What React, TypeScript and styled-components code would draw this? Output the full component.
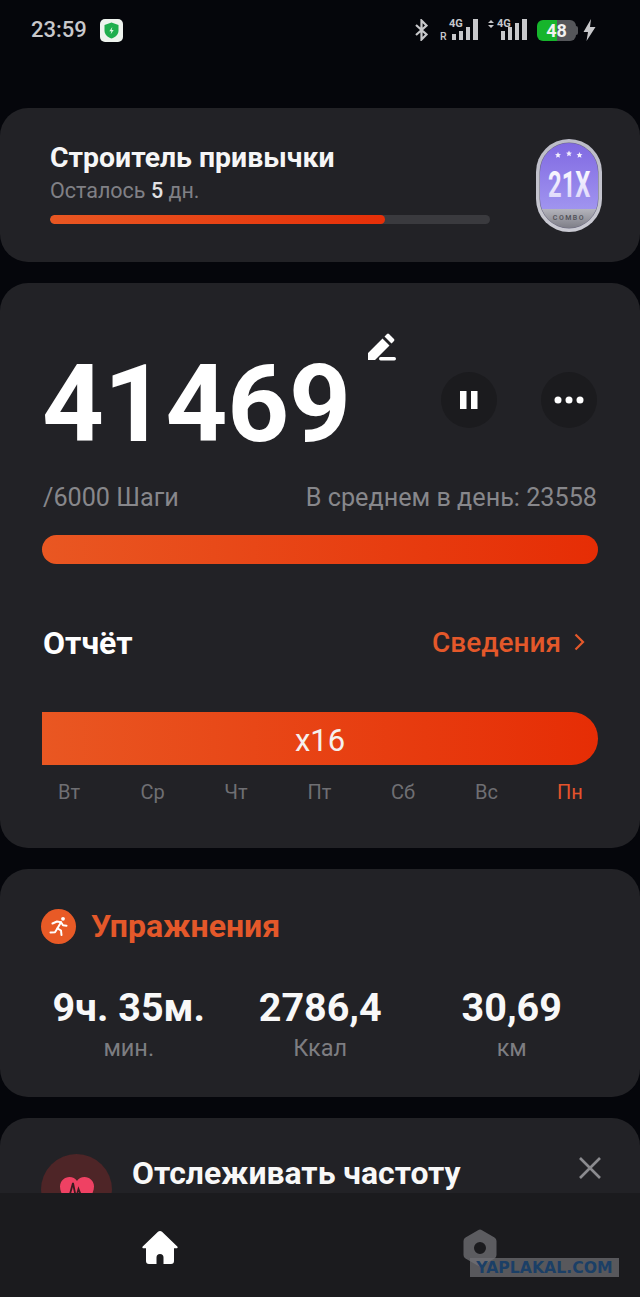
import React from "react";
import styled, { createGlobalStyle } from "styled-components";

const GlobalStyle = createGlobalStyle`
  html, body {
    margin: 0;
    padding: 0;
    background: #05060b;
  }

  body {
    font-family: Roboto, "Noto Sans", sans-serif;
  }
`;

const Page = styled.div`
  position: relative;
  width: 640px;
  height: 1297px;
  overflow: hidden;
  display: flex;
  flex-direction: column;
  background: #05060b;
`;

const StatusBar = styled.header`
  height: 108px;
  flex: none;
  box-sizing: border-box;
  padding: 19px 44px 0 31px;
  display: flex;
  align-items: flex-start;
  color: #c8c8cb;
`;

const Time = styled.span`
  font-size: 22px;
  font-weight: 500;
  line-height: 22px;
  margin-right: 13px;
`;

const StatusIcons = styled.div`
  margin-left: auto;
  display: flex;
  align-items: center;
  height: 22px;
`;

const SignalSvg = styled.svg<{ $gap: number }>`
  overflow: visible;
  margin-right: ${(props) => props.$gap}px;
`;

const Battery = styled.div`
  position: relative;
  width: 39px;
  height: 21px;
  margin: 0 7px 0 9px;
  border-radius: 6px;
  background: linear-gradient(90deg, #16b52c 0 51%, #55565a 51% 100%);
  color: #f1f1f1;
  font-size: 18px;
  font-weight: 700;
  line-height: 21px;
  text-align: center;

  &::after {
    content: "";
    position: absolute;
    right: -2px;
    top: 6px;
    width: 2px;
    height: 9px;
    border-radius: 0 2px 2px 0;
    background: #55565a;
  }
`;

const Cards = styled.main`
  flex: 1;
  display: flex;
  flex-direction: column;
  gap: 21px;
`;

const Card = styled.section`
  background: #222226;
  border-radius: 28px;
  box-sizing: border-box;
`;

const ChallengeCard = styled(Card)`
  height: 154px;
  padding: 0 38px 0 50px;
  display: flex;
  align-items: center;
  justify-content: space-between;
`;

const ChallengeInfo = styled.div`
  width: 440px;
  margin-top: -4px;
`;

const ChallengeTitle = styled.div`
  color: #f6f6f6;
  font-size: 28.4px;
  font-weight: 700;
  line-height: 32px;
`;

const ChallengeNote = styled.div`
  color: #808085;
  font-size: 21.5px;
  line-height: 26px;
  margin-top: 4px;

  b {
    color: #e2e2e4;
    font-weight: 500;
  }
`;

const ThinTrack = styled.div`
  height: 9px;
  margin-top: 11px;
  border-radius: 5px;
  background: #3a3a3e;
  overflow: hidden;
`;

const ThinFill = styled.div`
  height: 100%;
  border-radius: 5px;
  background: linear-gradient(90deg, #e95722, #e62f08);
`;

const StepsCard = styled(Card)`
  height: 565px;
  padding: 0 42px;
`;

const StepsHead = styled.div`
  height: 176px;
  display: flex;
  align-items: flex-start;
`;

const StepsCount = styled.div`
  color: #fff;
  font-size: 108px;
  font-weight: 700;
  line-height: 120px;
  margin-top: 61px;
  letter-spacing: -0.2px;
`;

const EditIcon = styled.svg`
  width: 30px;
  height: 30px;
  margin: 49px 0 0 16px;
`;

const RoundActions = styled.div`
  margin-left: auto;
  margin-top: 89px;
  margin-right: 1px;
  display: flex;
  gap: 44px;
`;

const RoundButton = styled.button`
  width: 56px;
  height: 56px;
  padding: 0;
  border: none;
  border-radius: 50%;
  background: #1b1b1e;
  display: flex;
  align-items: center;
  justify-content: center;
`;

const StepsMeta = styled.div`
  display: flex;
  justify-content: space-between;
  color: #87878b;
  font-size: 25.2px;
  line-height: 30px;
  margin: 24px 1px 0;
`;

const GoalBar = styled.div`
  height: 29px;
  margin-top: 22px;
  border-radius: 15px;
  background: linear-gradient(90deg, #e95722, #e62d05);
`;

const ReportRow = styled.div`
  display: flex;
  align-items: center;
  justify-content: space-between;
  margin-top: 60px;
  margin-left: 1px;
  height: 38px;
`;

const ReportTitle = styled.div`
  color: #fff;
  font-size: 32px;
  font-weight: 700;
`;

const DetailsLink = styled.a`
  display: flex;
  align-items: center;
  gap: 13px;
  color: #e4582a;
  font-size: 28px;
  font-weight: 500;
  margin: 0 13px 2px 0;
`;

const WeekBar = styled.div`
  height: 53px;
  margin-top: 50px;
  border-radius: 0 27px 27px 0;
  background: linear-gradient(90deg, #e95722, #e62d05);
  color: #f5f0ee;
  font-size: 31px;
  line-height: 58px;
  text-align: center;
`;

const WeekDays = styled.div`
  display: flex;
  justify-content: space-between;
  padding: 0 4px 0 3px;
  margin-top: 14px;
`;

const WeekDay = styled.span<{ $active?: boolean }>`
  width: 48px;
  text-align: center;
  color: ${(props) => (props.$active ? "#e4532c" : "#6f6f73")};
  font-size: 20px;
  line-height: 26px;
`;

const ExerciseCard = styled(Card)`
  height: 228px;
  padding: 39px 40px 0 41px;
`;

const ExerciseHead = styled.div`
  display: flex;
  align-items: center;
  gap: 15px;
`;

const ExerciseIcon = styled.div`
  width: 35px;
  height: 35px;
  border-radius: 50%;
  background: #e85a26;
  display: flex;
  align-items: center;
  justify-content: center;
`;

const ExerciseTitle = styled.div`
  color: #e4582a;
  font-size: 32px;
  font-weight: 700;
  line-height: 36px;
`;

const ExerciseStats = styled.div`
  display: grid;
  grid-template-columns: repeat(3, 191.5px);
  margin: 42px 0 0 -8px;
`;

const Stat = styled.div`
  text-align: center;
`;

const StatValue = styled.div`
  color: #f8f8f8;
  font-size: 39.5px;
  font-weight: 700;
  line-height: 44px;
  white-space: nowrap;
`;

const StatLabel = styled.div`
  color: #7d7d81;
  font-size: 23.5px;
  line-height: 28px;
  margin-top: 4px;
`;

const HeartCard = styled(Card)`
  flex: 1;
  padding: 36px 38px 0 41px;
  display: flex;
  align-items: flex-start;
`;

const HeartBadge = styled.div`
  width: 71px;
  height: 71px;
  flex: none;
  border-radius: 50%;
  background: #4e2527;
  display: flex;
  align-items: center;
  justify-content: center;
  padding-top: 6px;
  box-sizing: border-box;
`;

const HeartTitle = styled.div`
  color: #f8f8f8;
  font-size: 31.9px;
  font-weight: 700;
  line-height: 38px;
  margin-left: 20px;
`;

const CloseButton = styled.svg`
  width: 24px;
  height: 24px;
  margin-left: auto;
  margin-top: 2px;
`;

const BottomNav = styled.nav`
  position: absolute;
  left: 0;
  right: 0;
  bottom: 0;
  height: 104px;
  background: #1b1b1e;
  display: flex;
  padding-top: 38px;
  box-sizing: border-box;
`;

const NavItem = styled.div`
  width: 320px;
  display: flex;
  justify-content: center;
`;

const Watermark = styled.div`
  position: absolute;
  left: 470px;
  top: 65px;
  width: 149px;
  height: 19px;
  background: rgba(112, 112, 116, 0.72);
  color: #1b3f66;
  font-family: "DejaVu Sans", sans-serif;
  font-size: 15.7px;
  font-weight: 700;
  line-height: 19px;
  text-align: center;
  white-space: nowrap;
`;

const ShieldIcon = () => (
  <svg width="23" height="23" viewBox="0 0 23 23">
    <rect width="23" height="23" rx="5" fill="#eef3ee" />
    <path d="M11.5 3.5 18.5 6v5.5c0 4-3 6.800-7 8-4-1.200-7-4-7-8V6z" fill="#1fae4e" />
    <path d="M12.300 8 9.300 12.200h2l-.6 3 3-4.200h-2z" fill="#d8f5df" />
  </svg>
);

const BluetoothIcon = () => (
  <svg width="13" height="22" viewBox="0 0 13 22" fill="none" stroke="#c8c8cb" strokeWidth="2.200" style={{ marginRight: 12 }}>
    <path d="M1 6 11.500 15.500 6.500 20.500V1.500L11.500 6.500 1 16" />
  </svg>
);

// bars are given as [x, width, top] inside the 40x22 icon
const SignalIcon = ({ bars, prefix, gap }: { bars: number[][]; prefix: React.ReactNode; gap: number }) => (
  <SignalSvg $gap={gap} width="40" height="22" viewBox="0 0 40 22" fill="#c8c8cb">
    {prefix}
    <text x="9" y="8" fontFamily="Roboto, sans-serif" fontSize="11" fontWeight="700">
      4G
    </text>
    {bars.map(([x, width, top]) => (
      <rect key={x} x={x} y={top} width={width} height={21 - top} />
    ))}
  </SignalSvg>
);

const ChargeIcon = () => (
  <svg width="13" height="22" viewBox="0 0 13 22" fill="#c8c8cb">
    <path d="M8 0 .5 13h4.500l-1.500 9L12.500 8H7z" />
  </svg>
);

const ComboBadge = () => (
  <svg width="66" height="93" viewBox="0 0 66 93">
    <defs>
      <linearGradient id="rim" x1="0" y1="0" x2="0" y2="1">
        <stop offset="0" stopColor="#bcbcc8" />
        <stop offset="1" stopColor="#cacad2" />
      </linearGradient>
      <linearGradient id="violet" x1="0" y1="0" x2="0" y2="1">
        <stop offset="0" stopColor="#8069e2" />
        <stop offset="1" stopColor="#a094ef" />
      </linearGradient>
      <linearGradient id="steel" x1="0" y1="0" x2="0" y2="1">
        <stop offset="0" stopColor="#b4b4bc" />
        <stop offset="1" stopColor="#7b7b84" />
      </linearGradient>
      <linearGradient id="digits" x1="0" y1="0" x2="0" y2="1">
        <stop offset="0" stopColor="#ffffff" />
        <stop offset="1" stopColor="#d9d2fa" />
      </linearGradient>
      <clipPath id="badgeClip">
        <rect x="4" y="4" width="58" height="85" rx="29" />
      </clipPath>
    </defs>
    <rect width="66" height="93" rx="33" fill="url(#rim)" />
    <rect x="3.500" y="3.500" width="59" height="86" rx="29.500" fill="#6a6880" />
    <g clipPath="url(#badgeClip)">
      <rect x="4" y="4" width="58" height="66" fill="url(#violet)" />
      <rect x="4" y="70" width="58" height="20" fill="url(#steel)" />
    </g>
    {[
      [22, 16],
      [33, 14.5],
      [43.5, 16],
    ].map(([x, y]) => (
      <path
        key={x}
        transform={`translate(${x} ${y})`}
        d="M0-3 .9-1 3-.8 1.400.6 1.900 2.800 0 1.700-1.900 2.800-1.400.6-3-.8-.9-1z"
        fill="#f1eefd"
      />
    ))}
    <text
      transform="translate(12 58) scale(0.66 1)"
      fontFamily="Roboto, sans-serif"
      fontSize="36"
      fontWeight="700"
      fill="url(#digits)"
    >
      21X
    </text>
    <text x="33" y="81" fontFamily="Roboto, sans-serif" fontSize="7" fontWeight="500" letterSpacing="1.500" textAnchor="middle" fill="#4f4f56">
      COMBO
    </text>
  </svg>
);

const Details = () => (
  <svg width="11" height="18" viewBox="0 0 11 18" fill="none" stroke="#e4582a" strokeWidth="2.200">
    <path d="M1.500 1.500 9 9l-7.500 7.500" />
  </svg>
);

const RunnerIcon = () => (
  <svg width="20" height="20" viewBox="0 0 20 20" fill="none" stroke="#fff" strokeWidth="2" strokeLinecap="round" strokeLinejoin="round">
    <circle cx="14" cy="2.800" r="1.900" fill="#fff" stroke="none" />
    <path d="M3.500 7.500 8 5.500l4 .8-3.500 6 3.500 2.200.5 4.500" />
    <path d="M12 6.300 14 9.300l3.500.4" />
    <path d="M8.500 12.300 6 16.200l-4.500.3" />
  </svg>
);

const HeartIcon = () => (
  <svg width="36" height="33" viewBox="0 0 36 33">
    <path d="M18 32C8 25 1 19 1 10.500 1 5 5.500 1 10.500 1 13.700 1 16.400 2.500 18 5 19.600 2.500 22.300 1 25.500 1 30.500 1 35 5 35 10.500 35 19 28 25 18 32z" fill="#ef4163" />
    <path d="M5 18h6l3-11 3 15 2.500-9 2 5H31" fill="none" stroke="#3a1c20" strokeWidth="1.800" />
  </svg>
);

const HomeIcon = () => (
  <svg width="36" height="33" viewBox="0 0 36 33" fill="#fff">
    <path d="M18 0a3 3 0 0 1 2 .8l15.300 14.700c.8.800.3 1.800-.8 1.800H32V30a3 3 0 0 1-3 3h-7.500v-6.500a3.500 3.500 0 0 0-7 0V33H7a3 3 0 0 1-3-3V17.300H1.500c-1.100 0-1.600-1-.8-1.800L16 .8A3 3 0 0 1 18 0z" />
  </svg>
);

const NutIcon = () => (
  <svg width="36" height="38" viewBox="0 0 36 38" style={{ marginTop: -2 }}>
    <path fillRule="evenodd" fill="#5c5c60" d="M16 1.200a4 4 0 0 1 4 0l12.500 7.300a4 4 0 0 1 2 3.500v14a4 4 0 0 1-2 3.500L20 36.800a4 4 0 0 1-4 0L3.500 29.500a4 4 0 0 1-2-3.500V12a4 4 0 0 1 2-3.500zM18 13a6 6 0 1 0 0 12 6 6 0 0 0 0-12z" />
  </svg>
);

const days = ["Вт", "Ср", "Чт", "Пт", "Сб", "Вс", "Пн"];

const stats = [
  { value: "9ч. 35м.", label: "мин." },
  { value: "2786,4", label: "Ккал" },
  { value: "30,69", label: "км" },
];

const App = () => {
  return (
    <>
      <GlobalStyle />
      <Page>
        <StatusBar>
          <Time>23:59</Time>
          <ShieldIcon />
          <StatusIcons>
            <BluetoothIcon />
            <SignalIcon
              gap={8}
              bars={[
                [12, 4, 15],
                [19, 4, 12],
                [26, 4, 8],
                [33, 5, 0],
              ]}
              prefix={
                <text x="0" y="21" fontFamily="Roboto, sans-serif" fontSize="10.500" fontWeight="500">
                  R
                </text>
              }
            />
            <SignalIcon
              gap={0}
              bars={[
                [13, 4, 12],
                [20, 4, 8],
                [27, 4, 4],
                [34, 5, 0],
              ]}
              prefix={<path d="M3 1 6 4H0zM3 9 0 6h6z" />}
            />
            <Battery>48</Battery>
            <ChargeIcon />
          </StatusIcons>
        </StatusBar>

        <Cards>
          <ChallengeCard>
            <ChallengeInfo>
              <ChallengeTitle>Строитель привычки</ChallengeTitle>
              <ChallengeNote>
                Осталось <b>5</b> дн.
              </ChallengeNote>
              <ThinTrack>
                <ThinFill style={{ width: `${(335 / 440) * 100}%` }} />
              </ThinTrack>
            </ChallengeInfo>
            <ComboBadge />
          </ChallengeCard>

          <StepsCard>
            <StepsHead>
              <StepsCount>41469</StepsCount>
              <EditIcon viewBox="0 0 30 30">
                <path d="M1 21 15.500 6.500l7 7L8 28H1z M17.500 4.500 20 2a1.500 1.500 0 0 1 2 0l5 5a1.500 1.500 0 0 1 0 2l-2.500 2.500z" fill="#fff" />
                <rect x="12" y="25" width="17" height="3.500" rx="1.700" fill="#fff" />
              </EditIcon>
              <RoundActions>
                <RoundButton aria-label="Пауза">
                  <svg width="20" height="18" viewBox="0 0 20 18" fill="#fff">
                    <rect x="1" y="0" width="6.500" height="18" />
                    <rect x="12" y="0" width="6.500" height="18" />
                  </svg>
                </RoundButton>
                <RoundButton aria-label="Ещё">
                  <svg width="30" height="8" viewBox="0 0 30 8" fill="#fff">
                    <circle cx="4" cy="4" r="3.500" />
                    <circle cx="15" cy="4" r="3.500" />
                    <circle cx="26" cy="4" r="3.500" />
                  </svg>
                </RoundButton>
              </RoundActions>
            </StepsHead>
            <StepsMeta>
              <span>/6000 Шаги</span>
              <span>В среднем в день: 23558</span>
            </StepsMeta>
            <GoalBar />
            <ReportRow>
              <ReportTitle>Отчёт</ReportTitle>
              <DetailsLink>
                Сведения
                <Details />
              </DetailsLink>
            </ReportRow>
            <WeekBar>x16</WeekBar>
            <WeekDays>
              {days.map((day, index) => (
                <WeekDay key={day} $active={index === days.length - 1}>
                  {day}
                </WeekDay>
              ))}
            </WeekDays>
          </StepsCard>

          <ExerciseCard>
            <ExerciseHead>
              <ExerciseIcon>
                <RunnerIcon />
              </ExerciseIcon>
              <ExerciseTitle>Упражнения</ExerciseTitle>
            </ExerciseHead>
            <ExerciseStats>
              {stats.map((stat) => (
                <Stat key={stat.label}>
                  <StatValue>{stat.value}</StatValue>
                  <StatLabel>{stat.label}</StatLabel>
                </Stat>
              ))}
            </ExerciseStats>
          </ExerciseCard>

          <HeartCard>
            <HeartBadge>
              <HeartIcon />
            </HeartBadge>
            <HeartTitle>Отслеживать частоту</HeartTitle>
            <CloseButton viewBox="0 0 24 24" fill="none" stroke="#8b8b8f" strokeWidth="2.600">
              <path d="M2 2l20 20M22 2 2 22" />
            </CloseButton>
          </HeartCard>
        </Cards>

        <BottomNav>
          <NavItem>
            <HomeIcon />
          </NavItem>
          <NavItem>
            <NutIcon />
          </NavItem>
          <Watermark>YAPLAKAL.COM</Watermark>
        </BottomNav>
      </Page>
    </>
  );
};

export default App;
